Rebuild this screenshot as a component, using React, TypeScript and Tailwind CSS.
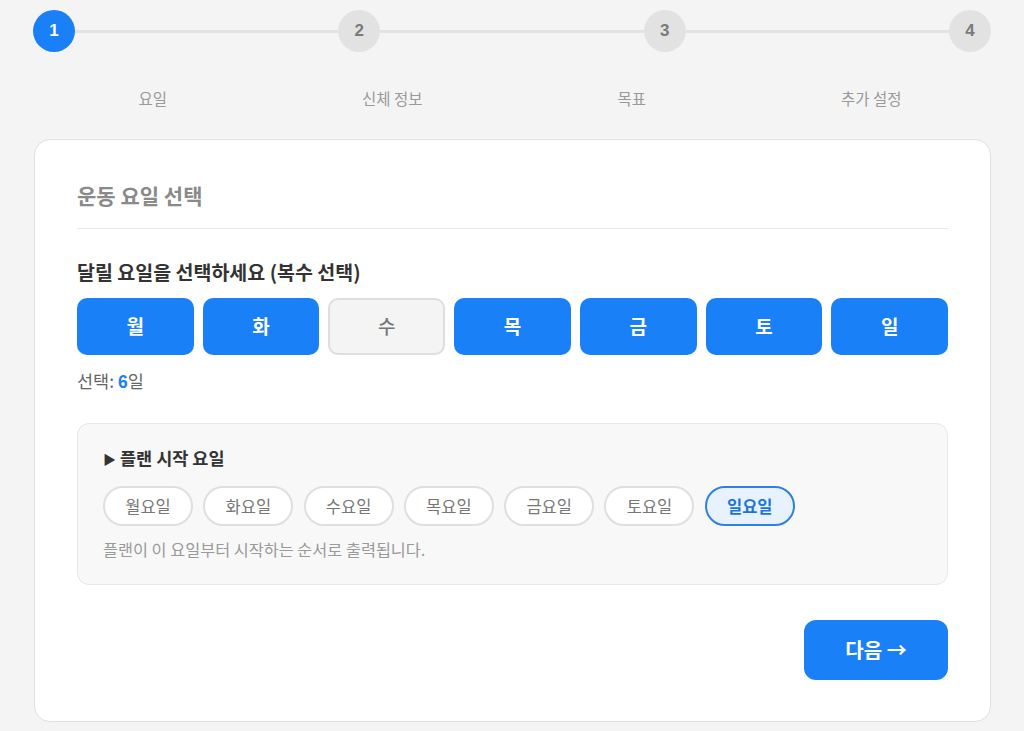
import React, { useState } from "react";

const FONT = { fontFamily: '"Noto Sans CJK KR", "Noto Sans", sans-serif' };
const LATIN = { fontFamily: '"Liberation Sans", Arial, sans-serif' };

const steps = ["요일", "신체 정보", "목표", "추가 설정"];
const days = ["월", "화", "수", "목", "금", "토", "일"];

export default function App() {
  const [selected, setSelected] = useState<boolean[]>([true, true, false, true, true, true, true]);
  const [start, setStart] = useState(6);
  const count = selected.filter(Boolean).length;

  return (
    <div className="min-h-screen bg-[#f4f4f4] px-[33px] pt-[10px] pb-[9px]" style={FONT}>
      {/* stepper */}
      <div className="flex items-center">
        {steps.map((_, i) => (
          <React.Fragment key={i}>
            {i > 0 && <div className="h-[3px] flex-1 bg-[#e3e3e3]" />}
            <div
              className={
                "flex h-[42px] w-[42px] shrink-0 items-center justify-center rounded-full text-[17px] font-bold " +
                (i === 0 ? "bg-[#1a80f7] text-white" : "bg-[#e2e2e2] text-[#7a7a7a]")
              }
              style={LATIN}
            >
              {i + 1}
            </div>
          </React.Fragment>
        ))}
      </div>
      <div className="mt-[36px] grid grid-cols-4 text-center text-[15.5px] leading-[20px] text-[#9a9a9a]">
        {steps.map((s) => (
          <div key={s}>{s}</div>
        ))}
      </div>

      {/* card */}
      <div className="mt-[31px] ml-px rounded-2xl border border-[#e0e0e0] bg-white px-[42px] pt-[41px] pb-[41px]">
        <div className="border-b border-[#e8e8e8] pb-[19px] text-[21px] font-bold leading-[28px] text-[#8a8a8a]">
          운동 요일 선택
        </div>

        <div className="mt-[30px] text-[19.5px] font-semibold leading-[26px] text-[#333]">
          달릴 요일을 선택하세요 (복수 선택)
        </div>

        <div className="mt-[13px] grid grid-cols-7 gap-[9px]">
          {days.map((d, i) => (
            <button
              key={d}
              onClick={() => setSelected((p) => p.map((v, j) => (j === i ? !v : v)))}
              className={
                "h-[57px] rounded-[10px] text-[19px] " +
                (selected[i]
                  ? "bg-[#1a80f7] font-bold text-white"
                  : "border-2 border-[#dedede] bg-[#f4f4f4] font-medium text-[#777]")
              }
            >
              {d}
            </button>
          ))}
        </div>

        <div className="mt-[14px] text-[17.5px] leading-[24px] text-[#666]">
          선택:{" "}
          <span className="font-bold text-[#1a80f7]" style={LATIN}>
            {count}
          </span>
          일
        </div>

        {/* plan start day */}
        <div className="mt-[29px] rounded-xl border border-[#e6e6e6] bg-[#f8f8f8] px-[25px] pt-[22px] pb-[25px]">
          <div className="flex items-center gap-[4px] text-[17.5px] font-bold leading-[24px] text-[#333]">
            <span className="text-[13px] leading-none">▶</span>
            <span>플랜 시작 요일</span>
          </div>
          <div className="mt-[16px] flex gap-[10.3px]">
            {days.map((d, i) => (
              <button
                key={d}
                onClick={() => setStart(i)}
                className={
                  "h-[40px] w-[90px] rounded-full border-2 text-[16.5px] " +
                  (start === i
                    ? "border-[#2f80e4] bg-[#e8f2fe] font-bold text-[#1a74e0]"
                    : "border-[#dfdfdf] bg-white text-[#777]")
                }
              >
                {d}요일
              </button>
            ))}
          </div>
          <div className="mt-[13px] text-[16.3px] leading-[20px] text-[#9a9a9a]">
            플랜이 이 요일부터 시작하는 순서로 출력됩니다.
          </div>
        </div>

        <div className="mt-[35px] flex justify-end">
          <button className="h-[60px] w-[144px] rounded-xl bg-[#1a80f7] text-[20px] font-bold text-white">
            다음 →
          </button>
        </div>
      </div>
    </div>
  );
}
